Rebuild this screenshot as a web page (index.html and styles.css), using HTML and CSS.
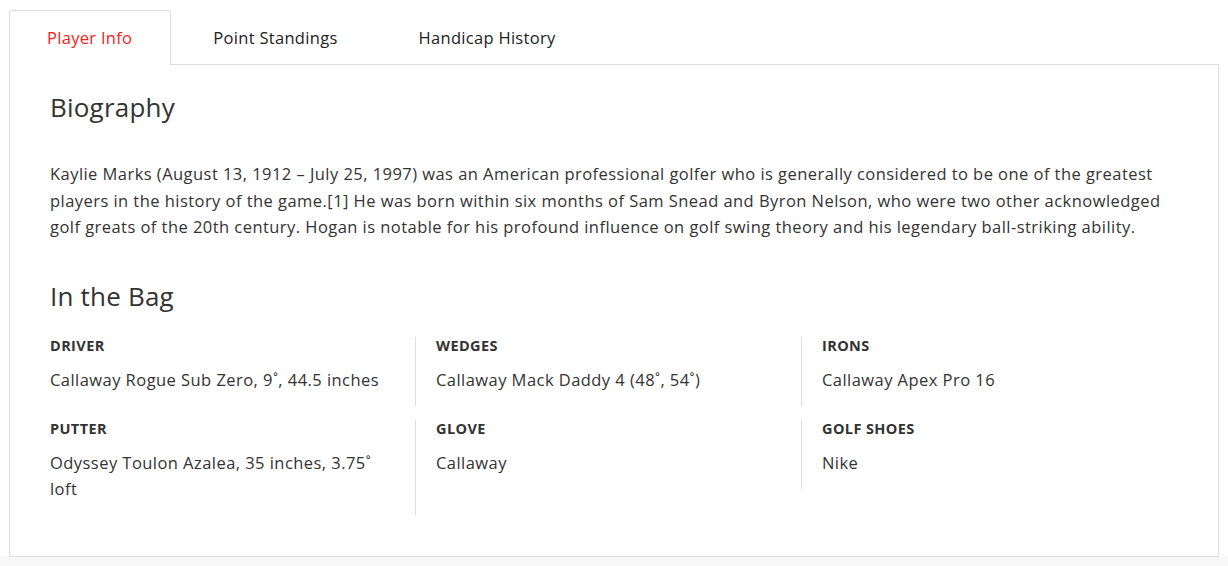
FILE: index.html
```html
<!DOCTYPE html>
<html lang="en">
<head>
    <meta charset="UTF-8">
    <title>Player Info</title>
    <link rel="stylesheet" href="styles.css">
</head>
<body>
<div class="page">
    <ul class="tabs">
        <li class="tab active">Player Info</li>
        <li class="tab">Point Standings</li>
        <li class="tab">Handicap History</li>
    </ul>

    <div class="panel">
        <h2>Biography</h2>
        <p class="bio">Kaylie Marks (August 13, 1912 – July 25, 1997) was an American professional golfer who is generally considered to be one of the greatest players in the history of the game.[1] He was born within six months of Sam Snead and Byron Nelson, who were two other acknowledged golf greats of the 20th century. Hogan is notable for his profound influence on golf swing theory and his legendary ball-striking ability.</p>

        <h2 class="bag-title">In the Bag</h2>
        <div class="bag">
            <div class="item"><div class="label">Driver</div><div class="value">Callaway Rogue Sub Zero, 9˚, 44.5 inches</div></div>
            <div class="item"><div class="label">Wedges</div><div class="value">Callaway Mack Daddy 4 (48˚, 54˚)</div></div>
            <div class="item"><div class="label">Irons</div><div class="value">Callaway Apex Pro 16</div></div>
            <div class="item"><div class="label">Putter</div><div class="value">Odyssey Toulon Azalea, 35 inches, 3.75˚ loft</div></div>
            <div class="item"><div class="label">Glove</div><div class="value">Callaway</div></div>
            <div class="item"><div class="label">Golf Shoes</div><div class="value">Nike</div></div>
        </div>
    </div>
</div>
<div class="footer-strip"></div>
</body>
</html>
```

FILE: styles.css
```css
body { margin: 0; background: #fff; font-family: "Open Sans", Arial, sans-serif; color: #333; letter-spacing: 0.45px; }
.page { padding: 10px 9px 0; }

.tabs { list-style: none; margin: 0; padding: 0; display: flex; }
.tab { height: 53px; line-height: 53px; padding: 0 38px 0 37px; margin-right: 4px; font-size: 16.5px; letter-spacing: 0.3px; color: #222; border: 1px solid transparent; border-bottom: none; border-radius: 4px 4px 0 0; }
.tab.active { color: #f21d1d; background: #fff; border-color: #ddd; margin-bottom: -1px; height: 54px; position: relative; z-index: 1; }

.panel { border: 1px solid #ddd; padding: 26px 30px 41px 40px; }
h2 { margin: 0; font-size: 26px; line-height: 32px; font-weight: 400; letter-spacing: 0.2px; color: #333; }
.bio { margin: 38px 0 0; font-size: 16.5px; line-height: 26.5px; color: #333; }
.bag-title { margin-top: 39px; }

.bag { display: grid; grid-template-columns: 1fr 1fr 1fr; row-gap: 14px; align-items: start; margin: 25px 0 0 -20px; }
.item { padding: 0 20px 13px; }
.item:nth-child(3n+1), .item:nth-child(3n+2) { border-right: 1px solid #ddd; }
.label { font-size: 14.5px; line-height: 18px; font-weight: 700; letter-spacing: 0.4px; text-transform: uppercase; color: #333; }
.value { margin-top: 12px; font-size: 16.5px; line-height: 26px; color: #333; }

.footer-strip { height: 10px; background: #f8f8f8; }
```
